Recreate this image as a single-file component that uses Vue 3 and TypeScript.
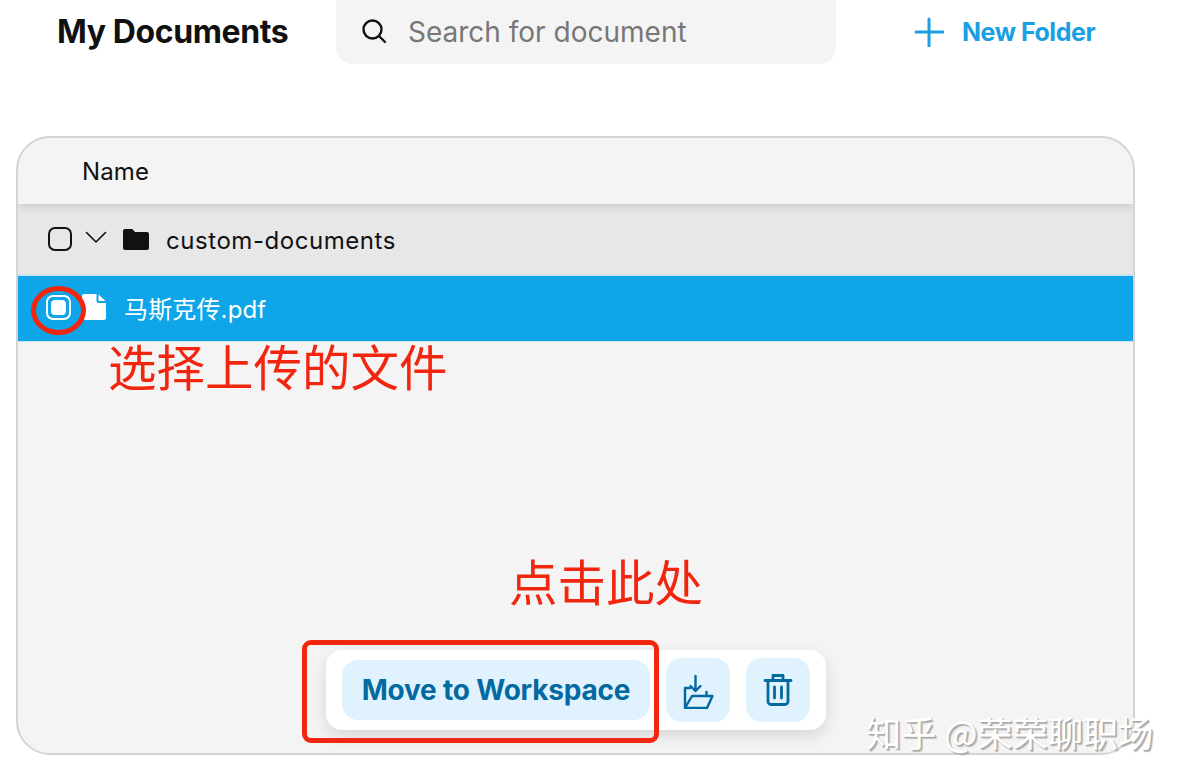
<script setup lang="ts">
const title = 'My Documents'
</script>

<template>
  <div class="page">
    <header class="top">
      <h1 class="title">{{ title }}</h1>
      <div class="search">
        <svg class="search-icon" width="28" height="28" viewBox="0 0 28 28" fill="none" stroke="#111" stroke-width="2.4" stroke-linecap="round">
          <circle cx="12.5" cy="12.500" r="9" />
          <path d="M19.500 19.500l5.500 5.500" />
        </svg>
        <span class="placeholder">Search for document</span>
      </div>
      <div class="new-folder">
        <svg width="30" height="30" viewBox="0 0 30 30" fill="none" stroke="#1b9fe2" stroke-width="3" stroke-linecap="round">
          <path d="M15 2v27M2 15h27" />
        </svg>
        <span>New Folder</span>
      </div>
    </header>

    <section class="table">
      <div class="head-row"><span>Name</span></div>
      <div class="folder-row">
        <span class="check"></span>
        <svg class="chevron" width="22" height="12" viewBox="0 0 22 12" fill="none" stroke="#111" stroke-width="1.6" stroke-linecap="round" stroke-linejoin="round">
          <path d="M1.5 1.5l9.5 9.5 9.5-9.5" />
        </svg>
        <svg class="folder" width="28" height="22" viewBox="0 0 28 22" fill="#111">
          <path d="M1 3a2 2 0 0 1 2-2h6.500a2 2 0 0 1 1.600.8L13 4h12a2 2 0 0 1 2 2v14a2 2 0 0 1-2 2H3a2 2 0 0 1-2-2z" />
        </svg>
        <span class="folder-name">custom-documents</span>
      </div>
      <div class="file-row">
        <span class="check-on"><i></i></span>
        <svg class="file" width="24" height="26" viewBox="0 0 24 26" fill="#fff">
          <path d="M2 0h12.500v6.500a2.500 2.500 0 0 0 2.500 2.500h7v15a2 2 0 0 1-2 2H2a2 2 0 0 1-2-2V2a2 2 0 0 1 2-2z" />
          <path d="M16.500 0.500l7 6.500h-6a1 1 0 0 1-1-1z" />
        </svg>
        <span class="file-name">马斯克传.pdf</span>
      </div>

      <div class="toolbar">
        <button class="move">Move to Workspace</button>
        <button class="square">
          <svg width="32" height="38" viewBox="0 0 32 38" fill="none" stroke="#0369a1" stroke-width="2.400" stroke-linecap="round" stroke-linejoin="round">
            <path d="M13.500 5v15M8.500 15l5 5 5-5" />
            <path d="M3 37V17h5M3 37h22l5.500-12H10L3 37zM24.500 25v-4" />
          </svg>
        </button>
        <button class="square">
          <svg width="30" height="34" viewBox="0 0 30 34" fill="none" stroke="#0369a1" stroke-width="2.800" stroke-linecap="round" stroke-linejoin="round">
            <path d="M2 7.500h26M10 7.500V2.500h10v5M5 7.500v21a3 3 0 0 0 3 3h14a3 3 0 0 0 3-3v-21M11.500 14v11M18.500 14v11" />
          </svg>
        </button>
      </div>
    </section>

    <!-- annotations drawn over the screenshot -->
    <div class="ring"></div>
    <div class="note note-a">选择上传的文件</div>
    <div class="note note-b">点击此处</div>
    <div class="box"></div>
    <div class="watermark">知乎 @荣荣聊职场</div>
  </div>
</template>

<style>
html, body { margin: 0; background: #fff; }
</style>

<style scoped>
.page {
  position: relative;
  width: 1184px;
  height: 782px;
  overflow: hidden;
  background: #fff;
  font-family: Inter, "Noto Sans CJK SC", sans-serif;
  color: #111;
}
.top {
  display: flex;
  align-items: center;
  height: 64px;
  padding-left: 57px;
}
.title {
  margin: 0;
  width: 279px;
  font-size: 32px;
  font-weight: 700;
  letter-spacing: -0.4px;
  line-height: 68px;
}
.search {
  display: flex;
  align-items: center;
  gap: 20px;
  width: 500px;
  height: 64px;
  padding-left: 24px;
  box-sizing: border-box;
  background: #f4f4f4;
  border-radius: 0 0 16px 16px;
}
.search-icon { flex: none; margin-top: -3px; }
.placeholder {
  font-size: 28px;
  line-height: 68px;
  color: #777;
  letter-spacing: 0;
}
.new-folder {
  display: flex;
  align-items: center;
  gap: 18px;
  margin-left: 78px;
  color: #1b9fe2;
  font-size: 25px;
  font-weight: 700;
  letter-spacing: -0.45px;
  line-height: 68px;
}
.table {
  position: relative;
  box-sizing: border-box;
  width: 1119px;
  height: 619px;
  margin: 72px 0 0 16px;
  background: #f4f4f4;
  border: 2px solid #d4d4d4;
  border-radius: 34px;
  overflow: hidden;
}
.head-row {
  display: flex;
  align-items: center;
  height: 66px;
  padding-left: 64px;
  font-size: 24px;
  letter-spacing: 0.1px;
  box-shadow: 0 3px 8px rgba(0, 0, 0, 0.12);
  position: relative;
  z-index: 1;
}
.folder-row {
  display: flex;
  align-items: center;
  height: 70px;
  padding-left: 30px;
  background: #e7e7e7;
  box-sizing: border-box;
  font-size: 24px;
  letter-spacing: 0.55px;
}
.check {
  box-sizing: border-box;
  width: 24px;
  height: 24px;
  border: 2px solid #111;
  border-radius: 7px;
  flex: none;
}
.chevron { margin: -5px 0 0 13px; }
.folder { margin-left: 15px; }
.folder-name { margin-left: 16px; padding-top: 2px; }
.file-row {
  display: flex;
  align-items: center;
  height: 68px;
  padding: 0 0 3px 28px;
  box-sizing: border-box;
  background: #0ea5e9;
  border-top: 2px solid #cfe3ee;
  border-bottom: 1px solid #cfe3ee;
  color: #fff;
  font-size: 24px;
  letter-spacing: 0.15px;
}
.check-on {
  display: flex;
  align-items: center;
  justify-content: center;
  width: 21px;
  height: 21px;
  border: 2px solid #fff;
  border-radius: 7px;
  flex: none;
}
.check-on i {
  display: block;
  width: 15px;
  height: 15px;
  background: #fff;
  border-radius: 4px;
}
.file { margin-left: 11px; }
.file-name { margin-left: 18px; }
.toolbar {
  position: absolute;
  left: 308px;
  top: 512px;
  display: flex;
  align-items: center;
  gap: 16px;
  box-sizing: border-box;
  width: 500px;
  height: 80px;
  padding: 0 16px;
  background: #fff;
  border-radius: 16px;
  box-shadow: 0 6px 16px rgba(0, 0, 0, 0.12);
}
.move,
.square {
  border: 0;
  padding: 0;
  background: #e0f2fe;
  color: #0369a1;
  font-family: inherit;
  display: flex;
  align-items: center;
  justify-content: center;
}
.move {
  width: 308px;
  height: 60px;
  border-radius: 16px;
  font-size: 28px;
  font-weight: 700;
  letter-spacing: -0.2px;
}
.square {
  width: 64px;
  height: 64px;
  border-radius: 16px;
}
.ring {
  position: absolute;
  left: 31px;
  top: 286px;
  width: 45px;
  height: 39px;
  border: 5px solid #f2260f;
  border-radius: 50%;
}
.note {
  position: absolute;
  color: #f2260f;
  font-family: "Noto Sans CJK SC", sans-serif;
  font-size: 48.500px;
  line-height: 56px;
  white-space: nowrap;
}
.note-a { left: 108px; top: 337px; }
.note-b { left: 509px; top: 552px; }
.box {
  position: absolute;
  left: 302px;
  top: 640px;
  width: 347px;
  height: 93px;
  border: 5px solid #f2260f;
  border-radius: 9px;
}
.watermark {
  position: absolute;
  left: 866px;
  top: 710px;
  font-family: "Noto Sans CJK SC", sans-serif;
  font-size: 35.200px;
  line-height: 44px;
  white-space: nowrap;
  color: #fff;
  text-shadow: 1px 1px 0 #a9a9a9, 2px 2px 1px #b5b5b5;
}
</style>
